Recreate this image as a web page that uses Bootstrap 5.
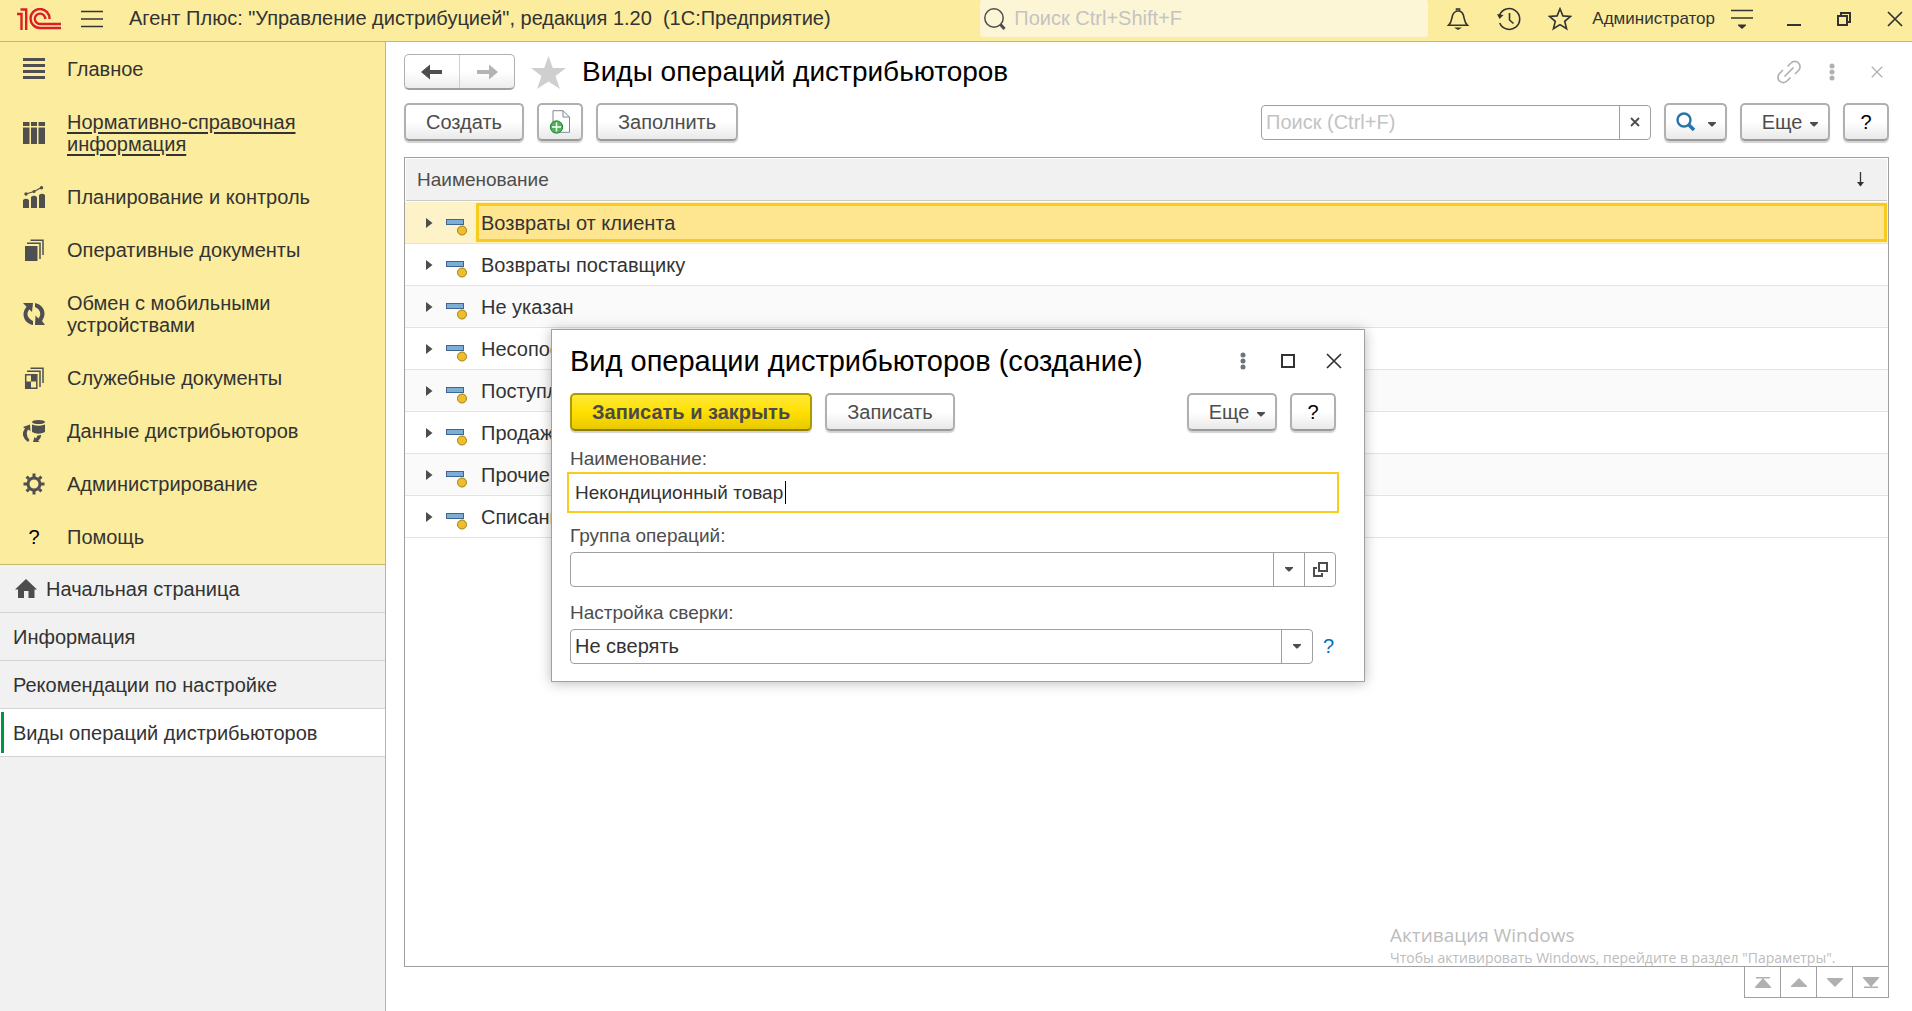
<!DOCTYPE html>
<html lang="ru">
<head>
<meta charset="utf-8">
<meta name="viewport" content="width=device-width, initial-scale=1">
<title>Агент Плюс: Управление дистрибуцией</title>
<link rel="stylesheet" href="https://cdn.jsdelivr.net/npm/bootstrap@5.3.0/dist/css/bootstrap.min.css">
<style>
  :root { --ink:#333; --soft:#4d4d4d; --line:#a0a0a0; --sand:#fbec9e; --sand-line:#c4b86c; --gold:#f9cb1f; }
  body { font-family:"Liberation Sans",Arial,sans-serif; font-size:20px; line-height:23px; color:var(--ink); background:#fff; }
  svg { display:block; flex:none; }
  button, input, select { font:inherit; color:inherit; }
  .plain-btn { background:none; border:0; padding:0; color:inherit; }

  .app-bar { height:42px; background:var(--sand); border-bottom:1px solid var(--sand-line); padding:0 9px 0 17px; }
  .app-title { margin-left:26px; white-space:pre; }
  .global-search { width:448px; height:37px; background:#fdf6d6; border-radius:3px; padding:0 4px; margin-bottom:4px; }
  .global-search input { background:none; border:0; outline:0; width:100%; padding:0; }
  input::placeholder { color:#c3c3c3; opacity:1; }
  .user-name { font-size:17px; }
  .bar-tools { gap:27px; margin-left:18px; height:37px; }
  .win-tools { gap:36px; margin-left:34px; height:37px; }

  .side-bar { width:386px; flex:none; background:#f1f1f1; border-right:1px solid var(--sand-line); }
  .sections { background:var(--sand); border-bottom:1px solid var(--sand-line); min-height:523px; line-height:22px; }
  .sections a { padding:16px 24px 15px 23px; gap:22px; color:var(--ink); text-decoration:none; }
  .sections a.current span { text-decoration:underline; text-underline-offset:3px; }
  .sections svg { color:#4f4f4f; }
  .section-mark { width:22px; text-align:center; color:#000; }
  .sections a span { max-width:256px; }
  .tabs-open a { height:48px; border-bottom:1px solid #d3d3d3; padding:1px 13px 0; gap:9px; color:var(--ink); text-decoration:none; }
  .tabs-open a.current { background:#fff; position:relative; }
  .tabs-open a.current::before { content:""; position:absolute; left:1px; top:3px; bottom:3px; width:3px; background:#009646; }

  .work-area { padding:12px 23px 13px 18px; position:relative; }
  .page-title { font-size:28px; line-height:36px; color:#000; margin:0; font-weight:400; }
  .page-tools { color:#b0b0b0; margin-right:6px; }
  .tool-row { gap:13px; margin-top:13px; }
  .key { height:38px; border:2px solid #b0b0b0; border-bottom-color:#999; border-radius:5px; padding:0 20px; color:var(--soft);
         background:linear-gradient(#fff 0,#fff 50%,#e9e9e9 100%); box-shadow:0 2px 1px rgba(0,0,0,.18); white-space:nowrap; }
  .key-icon { width:46px; padding:0; color:#000; }
  .key-find { width:63px; padding:0; }
  .key-more { width:90px; padding:0 0 0 10px; }
  .key-main { font-weight:700; border-color:#ad9a00; border-bottom-color:#8f7f00; background:linear-gradient(#ffe83a 0,#ffe000 50%,#e8c900 100%); color:#4a4a4a; }
  .history-keys { width:111px; height:36px; border:1px solid #b0b0b0; border-bottom:2px solid #a0a0a0; border-radius:5px; background:linear-gradient(#fff 0,#fff 50%,#ececec 100%); }
  .history-keys button + button { border-left:1px solid #d0d0d0; }
  .entry { height:35px; border:1px solid var(--line); border-radius:4px; background:#fff; }
  .entry input, .entry select { flex:1 1 0; min-width:0; border:0; outline:0; background:none; padding:0 4px; appearance:none; }
  .entry-part { width:31px; border-left:1px solid var(--line) !important; color:var(--soft); }
  .list-search { width:390px; }

  .list-frame { border:1px solid var(--line); margin-top:16px; }
  .list-grid { width:100%; border-collapse:separate; border-spacing:0; }
  .list-grid th { height:44px; background:#f1f1f1; border:1px solid #fff; box-shadow:inset 0 -1px #c9c9c9; font-size:19px; font-weight:400; color:var(--soft); padding:0 22px 2px 11px; }
  .list-grid td { height:42px; border-bottom:1px solid #e3e3e3; padding:0; }
  .list-grid tr:nth-child(odd) td { background:#fafafa; }
  .list-grid tbody tr.picked td { background:#fdf2c8; padding:1px 1px 1px 0; }
  .tree-lead { width:71px; padding-left:21px; gap:13px; }
  .tree-name { padding:5px 5px 4px; }
  .picked .tree-name { border:3px solid var(--gold); background:#fee58f; height:39px; padding:1px 2px 0; }
  .pager button { width:37px; height:32px; border:1px solid var(--line); color:#b0b0b0; margin-left:-1px; background:#fff; }
  .pager { margin-top:-1px; }
  .os-note { position:absolute; left:1004px; top:880px; color:#bcbcbc; font-family:"Open Sans",sans-serif; pointer-events:none; white-space:nowrap; }
  .os-note strong { display:block; font-weight:400; font-size:19px; line-height:26px; }
  .os-note small { display:block; font-size:14px; line-height:20px; }

  .edit-window { position:absolute; left:165px; top:287px; width:814px; border:1px solid var(--line); background:#fff; padding:13px 28px 17px 18px; box-shadow:0 1px 12px rgba(0,0,0,.28); }
  .edit-title { font-size:29px; line-height:36px; color:#000; margin:0; font-weight:400; }
  .edit-tools { gap:31px; margin-right:-6px; color:#333; }
  .edit-keys { gap:13px; margin-top:14px; padding-bottom:2px; }
  .edit-window label { display:block; color:var(--soft); font-size:19px; height:23px; margin:14px 0 5px; }
  .entry-active { border:2px solid var(--gold); border-radius:0; height:41px; margin:-3px -3px -3px; position:relative; font-size:19px; }
  .entry-active input { padding:0 6px; }
  .text-caret { position:absolute; left:216px; top:7px; width:1px; height:23px; background:#000; }
  .hint-link { color:#0070ba; text-decoration:none; margin:0 2px 0 10px; }
</style>
<script src="https://cdn.jsdelivr.net/npm/bootstrap@5.3.0/dist/js/bootstrap.bundle.min.js"></script>
</head>
<body class="d-flex flex-column min-vh-100">

<svg width="0" height="0" class="position-absolute" aria-hidden="true">
  <symbol id="leaf" viewBox="0 0 21 18">
    <rect x=".5" y="1.500" width="17" height="5" fill="#7dafd6" stroke="#3a6690"/>
    <circle cx="16" cy="12.500" r="4.500" fill="#f0be2c" stroke="#a07f12"/>
  </symbol>
  <symbol id="opener" viewBox="0 0 7 10"><path d="M0 0 6.500 5 0 10Z" fill="#4d4d4d"/></symbol>
  <symbol id="drop" viewBox="0 0 8 5"><path d="M0 0H8V1L4.500 4.500H3.500L0 1Z" fill="#4d4d4d"/></symbol>
  <symbol id="dots" viewBox="0 0 6 18"><g fill="currentColor"><circle cx="3" cy="3" r="2.500"/><circle cx="3" cy="9" r="2.500"/><circle cx="3" cy="15" r="2.500"/></g></symbol>
  <symbol id="cross" viewBox="0 0 16 16"><path d="M1 1 15 15M15 1 1 15" stroke="currentColor" stroke-width="1.700" fill="none"/></symbol>
</svg>

<header class="app-bar d-flex align-items-center">
  <svg width="44" height="22" viewBox="0 0 44 22" fill="none" stroke="#dc1f26" stroke-width="2.400" class="mb-1" role="img" aria-label="1С">
    <path d="M0 6H4.500V22M3.500 1.500H9.200V22M32.500 11A9.500 9.500 0 1 0 23 20H44M28.200 11A5.200 5.200 0 1 0 23 16H44"/>
  </svg>
  <button class="plain-btn ms-3 ps-1 mb-1" aria-label="Меню"><svg width="22" height="18" viewBox="0 0 22 18" stroke="#333" stroke-width="1.600"><path d="M0 1.500H22M0 9H22M0 16.500H22"/></svg></button>
  <div class="app-title mb-1">Агент Плюс: "Управление дистрибуцией", редакция 1.20  (1С:Предприятие)</div>
  <div class="global-search d-flex align-items-center ms-auto">
    <svg width="22" height="22" viewBox="0 0 22 22" fill="none" stroke="#4d4d4d"><circle cx="10" cy="10" r="9.200" stroke-width="1.500"/><path d="M16.500 16.500 20.500 21" stroke-width="3"/></svg>
    <input class="ms-2" type="text" placeholder="Поиск Ctrl+Shift+F" aria-label="Поиск по программе">
  </div>
  <div class="bar-tools d-flex align-items-center mb-1">
    <button class="plain-btn" aria-label="Уведомления"><svg width="24" height="24" viewBox="0 0 24 24" fill="none" stroke="#333" stroke-width="1.600"><path d="M2.500 18.300C6 15 5.500 12 6.500 8.500Q8 4.300 12 4T17.500 8.500C18.500 12 18 15 21.500 18.300Z"/><path d="M10.500 3.500V2H13.500V3.500" /><path d="M8 20.500H16L12 23Z" fill="#333" stroke="none"/></svg></button>
    <button class="plain-btn" aria-label="История"><svg width="24" height="24" viewBox="0 0 24 24" fill="none" stroke="#333" stroke-width="1.600"><path d="M2.500 8.500A10.400 10.400 0 1 1 2.700 16"/><path d="M12.500 6V13L16.500 16.500"/><path d="M0 7 6.500 8 2.500 12Z" fill="#333" stroke="none"/></svg></button>
    <button class="plain-btn" aria-label="Избранное"><svg width="24" height="24" viewBox="0 0 24 24" fill="none" stroke="#333" stroke-width="1.600"><path d="M12 1.800 14.900 8.900 22.500 9.400 16.700 14.300 18.600 21.700 12 17.600 5.400 21.700 7.300 14.300 1.500 9.400 9.100 8.900Z"/></svg></button>
  </div>
  <span class="user-name ms-3 ps-1 mb-1">Администратор</span>
  <button class="plain-btn ms-3 mb-1" aria-label="Настройки"><svg width="22" height="20" viewBox="0 0 22 20" fill="none" stroke="#333" stroke-width="1.600"><path d="M0 1.500H22M0 9H22"/><path d="M7 15.500H15V16.500L11 20 7 16.500Z" fill="#333" stroke="none"/></svg></button>
  <div class="win-tools d-flex align-items-center mb-1">
    <button class="plain-btn" aria-label="Свернуть"><svg width="14" height="14" viewBox="0 0 14 14"><path d="M0 12H14V14H0Z" fill="#333"/></svg></button>
    <button class="plain-btn" aria-label="Восстановить"><svg width="14" height="14" viewBox="0 0 14 14" fill="none" stroke="#333" stroke-width="2"><path d="M1 4H10V13H1ZM4 4V1H13V10H10"/></svg></button>
    <button class="plain-btn" aria-label="Закрыть"><svg width="16" height="16"><use href="#cross"/></svg></button>
  </div>
</header>

<div class="d-flex flex-grow-1">
  <aside class="side-bar">
    <nav class="sections d-flex flex-column" aria-label="Разделы">
      <a href="#" class="d-flex align-items-center"><svg width="22" height="22" viewBox="0 0 22 22" fill="currentColor"><path d="M0 0H22V3H0ZM0 6H22V9H0ZM0 12H22V15H0ZM0 18H22V21H0Z"/></svg><span>Главное</span></a>
      <a href="#" class="current d-flex align-items-center"><svg width="22" height="22" viewBox="0 0 22 22" fill="currentColor"><path d="M0 0H6.500V4H0ZM8 0H14V4H8ZM15.500 0H22V4H15.500ZM0 5.500H6.500V22H0ZM8 5.500H14V22H8ZM15.500 5.500H22V22H15.500Z"/></svg><span>Нормативно-справочная информация</span></a>
      <a href="#" class="d-flex align-items-center"><svg width="22" height="22" viewBox="0 0 22 22" fill="currentColor"><path d="M0 14Q3 11.500 6 14V22H0ZM8 11Q11 8.500 14 11V22H8ZM16 9Q19 6.500 22 9V22H16Z"/><path d="M3 8 11 5.500 18.500 1.500" stroke="currentColor" stroke-width="1.300" fill="none"/><circle cx="3" cy="8" r="1.700"/><circle cx="11" cy="5.500" r="1.500"/><circle cx="18.500" cy="1.700" r="1.700"/></svg><span>Планирование и контроль</span></a>
      <a href="#" class="d-flex align-items-center"><svg width="22" height="22" viewBox="0 0 22 22"><path d="M2 7H14.500V22H2Z" fill="currentColor"/><path d="M4 4.200H17V20M7.500 1.200H20V16" fill="none" stroke="currentColor" stroke-width="1.500"/></svg><span>Оперативные документы</span></a>
      <a href="#" class="d-flex align-items-center"><svg width="22" height="22" viewBox="0 0 22 22" fill="currentColor"><path d="M0 0H10L9 9 6.500 6.500C3 10 4 15.500 10 18V22C1 20 -2.500 11 3.500 3.700ZM12 0C21.500 2 24 11 19 18L22 22H12L12.500 12.500 15.500 15.500C19 11 17 6 12 4Z"/></svg><span>Обмен с мобильными устройствами</span></a>
      <a href="#" class="d-flex align-items-center"><svg width="22" height="22" viewBox="0 0 22 22"><path d="M2.700 7.700H13.800V21.300H2.700Z" fill="none" stroke="currentColor" stroke-width="1.500"/><path d="M8 8H13V14.500H8ZM3 14.500H8V21H3Z" fill="currentColor"/><path d="M4 4.200H17V20M7.500 1.200H20V16" fill="none" stroke="currentColor" stroke-width="1.500"/></svg><span>Служебные документы</span></a>
      <a href="#" class="d-flex align-items-center"><svg width="22" height="22" viewBox="0 0 22 22" fill="currentColor"><ellipse cx="15.500" cy="2" rx="6.500" ry="2"/><path d="M9 4.500Q15.500 7 22 4.500V12Q15.500 15.500 9 12ZM0 7 7 4.500 7.500 11 5 9.500Q2 15 6.500 20L5 22Q-3.500 16 2 8.500ZM18 15Q18.500 18 15 21L17 22H10L11.500 17 13 18.500 14.500 15.500Z"/></svg><span>Данные дистрибьюторов</span></a>
      <a href="#" class="d-flex align-items-center"><svg width="22" height="22" viewBox="0 0 22 22" fill="none" stroke="currentColor"><circle cx="11" cy="11" r="6" stroke-width="3"/><path d="M11 .5V4M11 18V21.500M.5 11H4M18 11H21.500M3.600 3.600 6 6M16 16 18.400 18.400M18.400 3.600 16 6M6 16 3.600 18.400" stroke-width="3"/></svg><span>Администрирование</span></a>
      <a href="#" class="d-flex align-items-center"><span class="section-mark">?</span><span>Помощь</span></a>
    </nav>
    <nav class="tabs-open d-flex flex-column" aria-label="Открытые окна">
      <a href="#" class="d-flex align-items-center"><svg width="24" height="20" viewBox="0 0 24 20"><path d="M13 0 24 10.500H21.500V19H15.500V12H11V19H5V10.500H2Z" fill="#4d4d4d"/></svg>Начальная страница</a>
      <a href="#" class="d-flex align-items-center">Информация</a>
      <a href="#" class="d-flex align-items-center">Рекомендации по настройке</a>
      <a href="#" class="current d-flex align-items-center">Виды операций дистрибьюторов</a>
    </nav>
  </aside>

  <main class="work-area d-flex flex-column flex-grow-1">
    <div class="d-flex align-items-center">
      <div class="history-keys d-flex">
        <button class="plain-btn flex-fill d-flex align-items-center justify-content-center" aria-label="Назад"><svg width="22" height="16" viewBox="0 0 22 16"><path d="M0 8 9 .5V6H21V10H9V15.500Z" fill="#4d4d4d"/></svg></button>
        <button class="plain-btn flex-fill d-flex align-items-center justify-content-center" aria-label="Вперед"><svg width="22" height="16" viewBox="0 0 22 16"><path d="M22 8 13 .5V6H1V10H13V15.500Z" fill="#b3b3b3"/></svg></button>
      </div>
      <button class="plain-btn mx-3" aria-label="В избранное"><svg width="35" height="33" viewBox="0 0 35 33"><path d="M17.500 0 21.800 12H35L24.500 20 29 33 17.500 25.500 6 33 10.500 20 0 12H13.200Z" fill="#cfcfcf"/></svg></button>
      <h1 class="page-title">Виды операций дистрибьюторов</h1>
      <div class="page-tools d-flex align-items-center ms-auto">
        <button class="plain-btn" aria-label="Ссылка"><svg width="24" height="24" viewBox="0 0 24 24" fill="none" stroke="currentColor" stroke-width="1.700"><path d="M10.500 6.500 14 3A5 5 0 0 1 21.500 10.500L18 14M13.500 17.500 10 21A5 5 0 0 1 2.500 13.500L6 10M7.500 16.500 16.500 7.500"/></svg></button>
        <button class="plain-btn mx-4 px-1" aria-label="Действия"><svg width="6" height="18"><use href="#dots"/></svg></button>
        <button class="plain-btn ms-2" aria-label="Закрыть страницу"><svg width="12" height="12"><use href="#cross"/></svg></button>
      </div>
    </div>

    <div class="tool-row d-flex align-items-center">
      <button class="key">Создать</button>
      <button class="key key-icon d-flex align-items-center justify-content-center" aria-label="Создать группу"><svg width="22" height="24" viewBox="0 0 22 24"><path d="M4 .7H14L20.500 7V22.300H4Z" fill="#fff" stroke="#7b8899"/><path d="M14 .7V7H20.500" fill="none" stroke="#7b8899"/><circle cx="7.500" cy="17" r="6.200" fill="#4cb355" stroke="#27863a"/><path d="M7.500 12.500V21.500M3 17H12" stroke="#fff" stroke-width="1.500"/></svg></button>
      <button class="key">Заполнить</button>
      <div class="entry list-search d-flex align-items-stretch ms-auto">
        <input type="text" placeholder="Поиск (Ctrl+F)" aria-label="Поиск в списке">
        <button class="plain-btn entry-part d-flex align-items-center justify-content-center" aria-label="Очистить"><svg width="10" height="10" viewBox="0 0 10 10"><path d="M1 1 9 9M9 1 1 9" stroke="#4d4d4d" stroke-width="1.800"/></svg></button>
      </div>
      <button class="key key-find d-flex align-items-center justify-content-center gap-2" aria-label="Найти"><svg width="20" height="20" viewBox="0 0 20 20" fill="none" stroke="#2a74a8"><circle cx="8" cy="8" r="6.500" stroke-width="2.400"/><path d="M12.500 12.500 18 18" stroke-width="3.500"/></svg><svg class="ms-1 mt-1" width="8" height="5"><use href="#drop"/></svg></button>
      <button class="key key-more d-flex align-items-center justify-content-center">Еще<svg class="ms-2 mt-1" width="8" height="5"><use href="#drop"/></svg></button>
      <button class="key key-icon">?</button>
    </div>

    <div class="list-frame flex-grow-1">
      <table class="list-grid">
        <thead><tr><th scope="col"><div class="d-flex justify-content-between align-items-center">Наименование<svg width="9" height="15" viewBox="0 0 9 15"><path d="M4.500 0V14" stroke="#333" stroke-width="1.300"/><path d="M1 10H8L4.500 14.500Z" fill="#333"/></svg></div></th></tr></thead>
        <tbody>
          <tr class="picked"><td><div class="d-flex align-items-center"><div class="tree-lead d-flex align-items-center"><svg width="7" height="10"><use href="#opener"/></svg><svg class="mt-2" width="21" height="18"><use href="#leaf"/></svg></div><div class="tree-name flex-grow-1 d-flex align-items-center">Возвраты от клиента</div></div></td></tr>
          <tr><td><div class="d-flex align-items-center"><div class="tree-lead d-flex align-items-center"><svg width="7" height="10"><use href="#opener"/></svg><svg class="mt-2" width="21" height="18"><use href="#leaf"/></svg></div><div class="tree-name">Возвраты поставщику</div></div></td></tr>
          <tr><td><div class="d-flex align-items-center"><div class="tree-lead d-flex align-items-center"><svg width="7" height="10"><use href="#opener"/></svg><svg class="mt-2" width="21" height="18"><use href="#leaf"/></svg></div><div class="tree-name">Не указан</div></div></td></tr>
          <tr><td><div class="d-flex align-items-center"><div class="tree-lead d-flex align-items-center"><svg width="7" height="10"><use href="#opener"/></svg><svg class="mt-2" width="21" height="18"><use href="#leaf"/></svg></div><div class="tree-name">Несопос</div></div></td></tr>
          <tr><td><div class="d-flex align-items-center"><div class="tree-lead d-flex align-items-center"><svg width="7" height="10"><use href="#opener"/></svg><svg class="mt-2" width="21" height="18"><use href="#leaf"/></svg></div><div class="tree-name">Поступл</div></div></td></tr>
          <tr><td><div class="d-flex align-items-center"><div class="tree-lead d-flex align-items-center"><svg width="7" height="10"><use href="#opener"/></svg><svg class="mt-2" width="21" height="18"><use href="#leaf"/></svg></div><div class="tree-name">Продажи</div></div></td></tr>
          <tr><td><div class="d-flex align-items-center"><div class="tree-lead d-flex align-items-center"><svg width="7" height="10"><use href="#opener"/></svg><svg class="mt-2" width="21" height="18"><use href="#leaf"/></svg></div><div class="tree-name">Прочие</div></div></td></tr>
          <tr><td><div class="d-flex align-items-center"><div class="tree-lead d-flex align-items-center"><svg width="7" height="10"><use href="#opener"/></svg><svg class="mt-2" width="21" height="18"><use href="#leaf"/></svg></div><div class="tree-name">Списани</div></div></td></tr>
        </tbody>
      </table>
    </div>
    <div class="pager d-flex justify-content-end">
      <button class="plain-btn d-flex align-items-center justify-content-center" aria-label="В начало"><svg width="16" height="11" viewBox="0 0 16 11" fill="currentColor"><path d="M1 0H15V1.500H1ZM8 1 16 10V11H0V10Z"/></svg></button>
      <button class="plain-btn d-flex align-items-center justify-content-center" aria-label="Вверх"><svg width="16" height="11" viewBox="0 0 16 11" fill="currentColor"><path d="M8 1 16 9V10H0V9Z"/></svg></button>
      <button class="plain-btn d-flex align-items-center justify-content-center" aria-label="Вниз"><svg width="16" height="11" viewBox="0 0 16 11" fill="currentColor"><path d="M8 10 16 2V1H0V2Z"/></svg></button>
      <button class="plain-btn d-flex align-items-center justify-content-center" aria-label="В конец"><svg width="16" height="11" viewBox="0 0 16 11" fill="currentColor"><path d="M1 11H15V9.500H1ZM8 10 16 1V0H0V1Z"/></svg></button>
    </div>

    <div class="os-note"><strong>Активация Windows</strong><small>Чтобы активировать Windows, перейдите в раздел "Параметры".</small></div>

    <section class="edit-window" role="dialog" aria-labelledby="edit-title">
      <div class="d-flex align-items-center">
        <h2 class="edit-title" id="edit-title">Вид операции дистрибьюторов (создание)</h2>
        <div class="edit-tools d-flex align-items-center ms-auto">
          <button class="plain-btn text-secondary me-1" aria-label="Действия окна"><svg width="6" height="18"><use href="#dots"/></svg></button>
          <button class="plain-btn" aria-label="Развернуть"><svg width="14" height="14" viewBox="0 0 14 14" fill="none" stroke="#333" stroke-width="2"><path d="M1 1H13V13H1Z"/></svg></button>
          <button class="plain-btn" aria-label="Закрыть окно"><svg width="16" height="16"><use href="#cross"/></svg></button>
        </div>
      </div>
      <div class="edit-keys d-flex">
        <button class="key key-main">Записать и закрыть</button>
        <button class="key">Записать</button>
        <button class="key key-more ms-auto d-flex align-items-center justify-content-center">Еще<svg class="ms-2 mt-1" width="8" height="5"><use href="#drop"/></svg></button>
        <button class="key key-icon">?</button>
      </div>
      <label for="f-name">Наименование:</label>
      <div class="entry entry-active d-flex"><input id="f-name" type="text" value="Некондиционный товар"><span class="text-caret"></span></div>
      <label for="f-group">Группа операций:</label>
      <div class="entry d-flex align-items-stretch">
        <input id="f-group" type="text">
        <button class="plain-btn entry-part d-flex align-items-center justify-content-center" aria-label="Выбрать"><svg width="8" height="5"><use href="#drop"/></svg></button>
        <button class="plain-btn entry-part d-flex align-items-center justify-content-center" aria-label="Открыть"><svg width="15" height="15" viewBox="0 0 15 15" fill="none" stroke="#4d4d4d" stroke-width="2"><path d="M6 1H14V9H6ZM4 6H1V14H9V11"/></svg></button>
      </div>
      <label for="f-check">Настройка сверки:</label>
      <div class="d-flex align-items-center">
        <div class="entry d-flex align-items-stretch flex-grow-1">
          <select id="f-check"><option>Не сверять</option></select>
          <span class="entry-part d-flex align-items-center justify-content-center"><svg width="8" height="5"><use href="#drop"/></svg></span>
        </div>
        <a href="#" class="hint-link" aria-label="Справка по настройке">?</a>
      </div>
    </section>
  </main>
</div>
</body>
</html>
